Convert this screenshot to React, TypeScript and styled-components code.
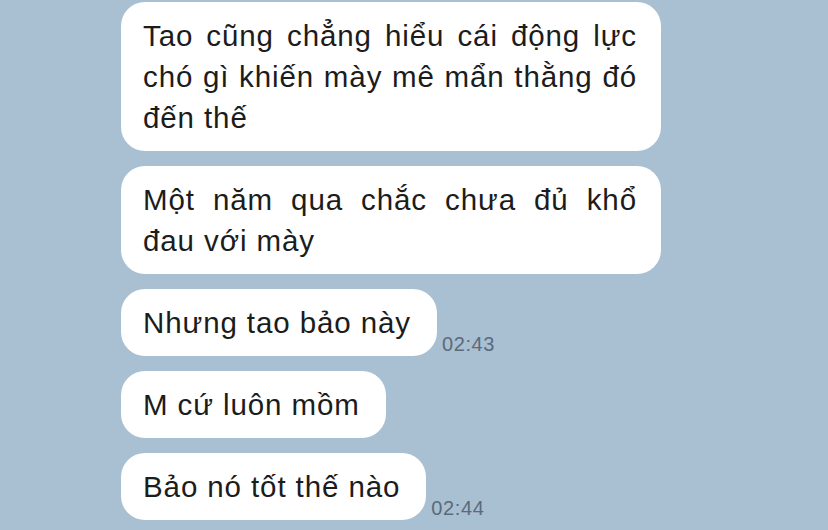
import styled, { createGlobalStyle } from "styled-components";

const GlobalStyle = createGlobalStyle`
  html, body {
    margin: 0;
    padding: 0;
    background: #a9bfd2;
  }
  body {
    font-family: "Liberation Sans", Arial, sans-serif;
  }
`;

const Chat = styled.div`
  width: 828px;
  height: 530px;
  overflow: hidden;
  box-sizing: border-box;
  padding: 2px 0 0 121px;
  display: flex;
  flex-direction: column;
  gap: 15px;
  background: #a9bfd2;
`;

const Row = styled.div`
  display: flex;
  align-items: flex-end;
  gap: 5px;
`;

const Bubble = styled.div<{ $wide?: boolean }>`
  background: #ffffff;
  color: #1c1c1c;
  border-radius: 24px;
  padding: 13px 22px 13px 22px;
  font-size: 29.5px;
  line-height: 41px;
  letter-spacing: 0.9px;
  width: ${(p) => (p.$wide ? "540px" : "auto")};
  box-sizing: border-box;
  text-align: ${(p) => (p.$wide ? "justify" : "left")};
  padding-right: ${(p) => (p.$wide ? "24px" : "26px")};
  white-space: ${(p) => (p.$wide ? "normal" : "nowrap")};
`;

const Time = styled.span`
  color: #5b6b7c;
  font-size: 20px;
  letter-spacing: 0.6px;
  line-height: 22px;
  padding-bottom: 1px;
`;

type Msg = { text: string; wide?: boolean; time?: string };

const messages: Msg[] = [
  {
    text: "Tao cũng chẳng hiểu cái động lực chó gì khiến mày mê mẩn thằng đó đến thế",
    wide: true,
  },
  { text: "Một năm qua chắc chưa đủ khổ đau với mày", wide: true },
  { text: "Nhưng tao bảo này", time: "02:43" },
  { text: "M cứ luôn mồm" },
  { text: "Bảo nó tốt thế nào", time: "02:44" },
];

export default function App() {
  return (
    <>
      <GlobalStyle />
      <Chat>
        {messages.map((m, i) => (
          <Row key={i}>
            <Bubble $wide={m.wide}>{m.text}</Bubble>
            {m.time && <Time>{m.time}</Time>}
          </Row>
        ))}
      </Chat>
    </>
  );
}
